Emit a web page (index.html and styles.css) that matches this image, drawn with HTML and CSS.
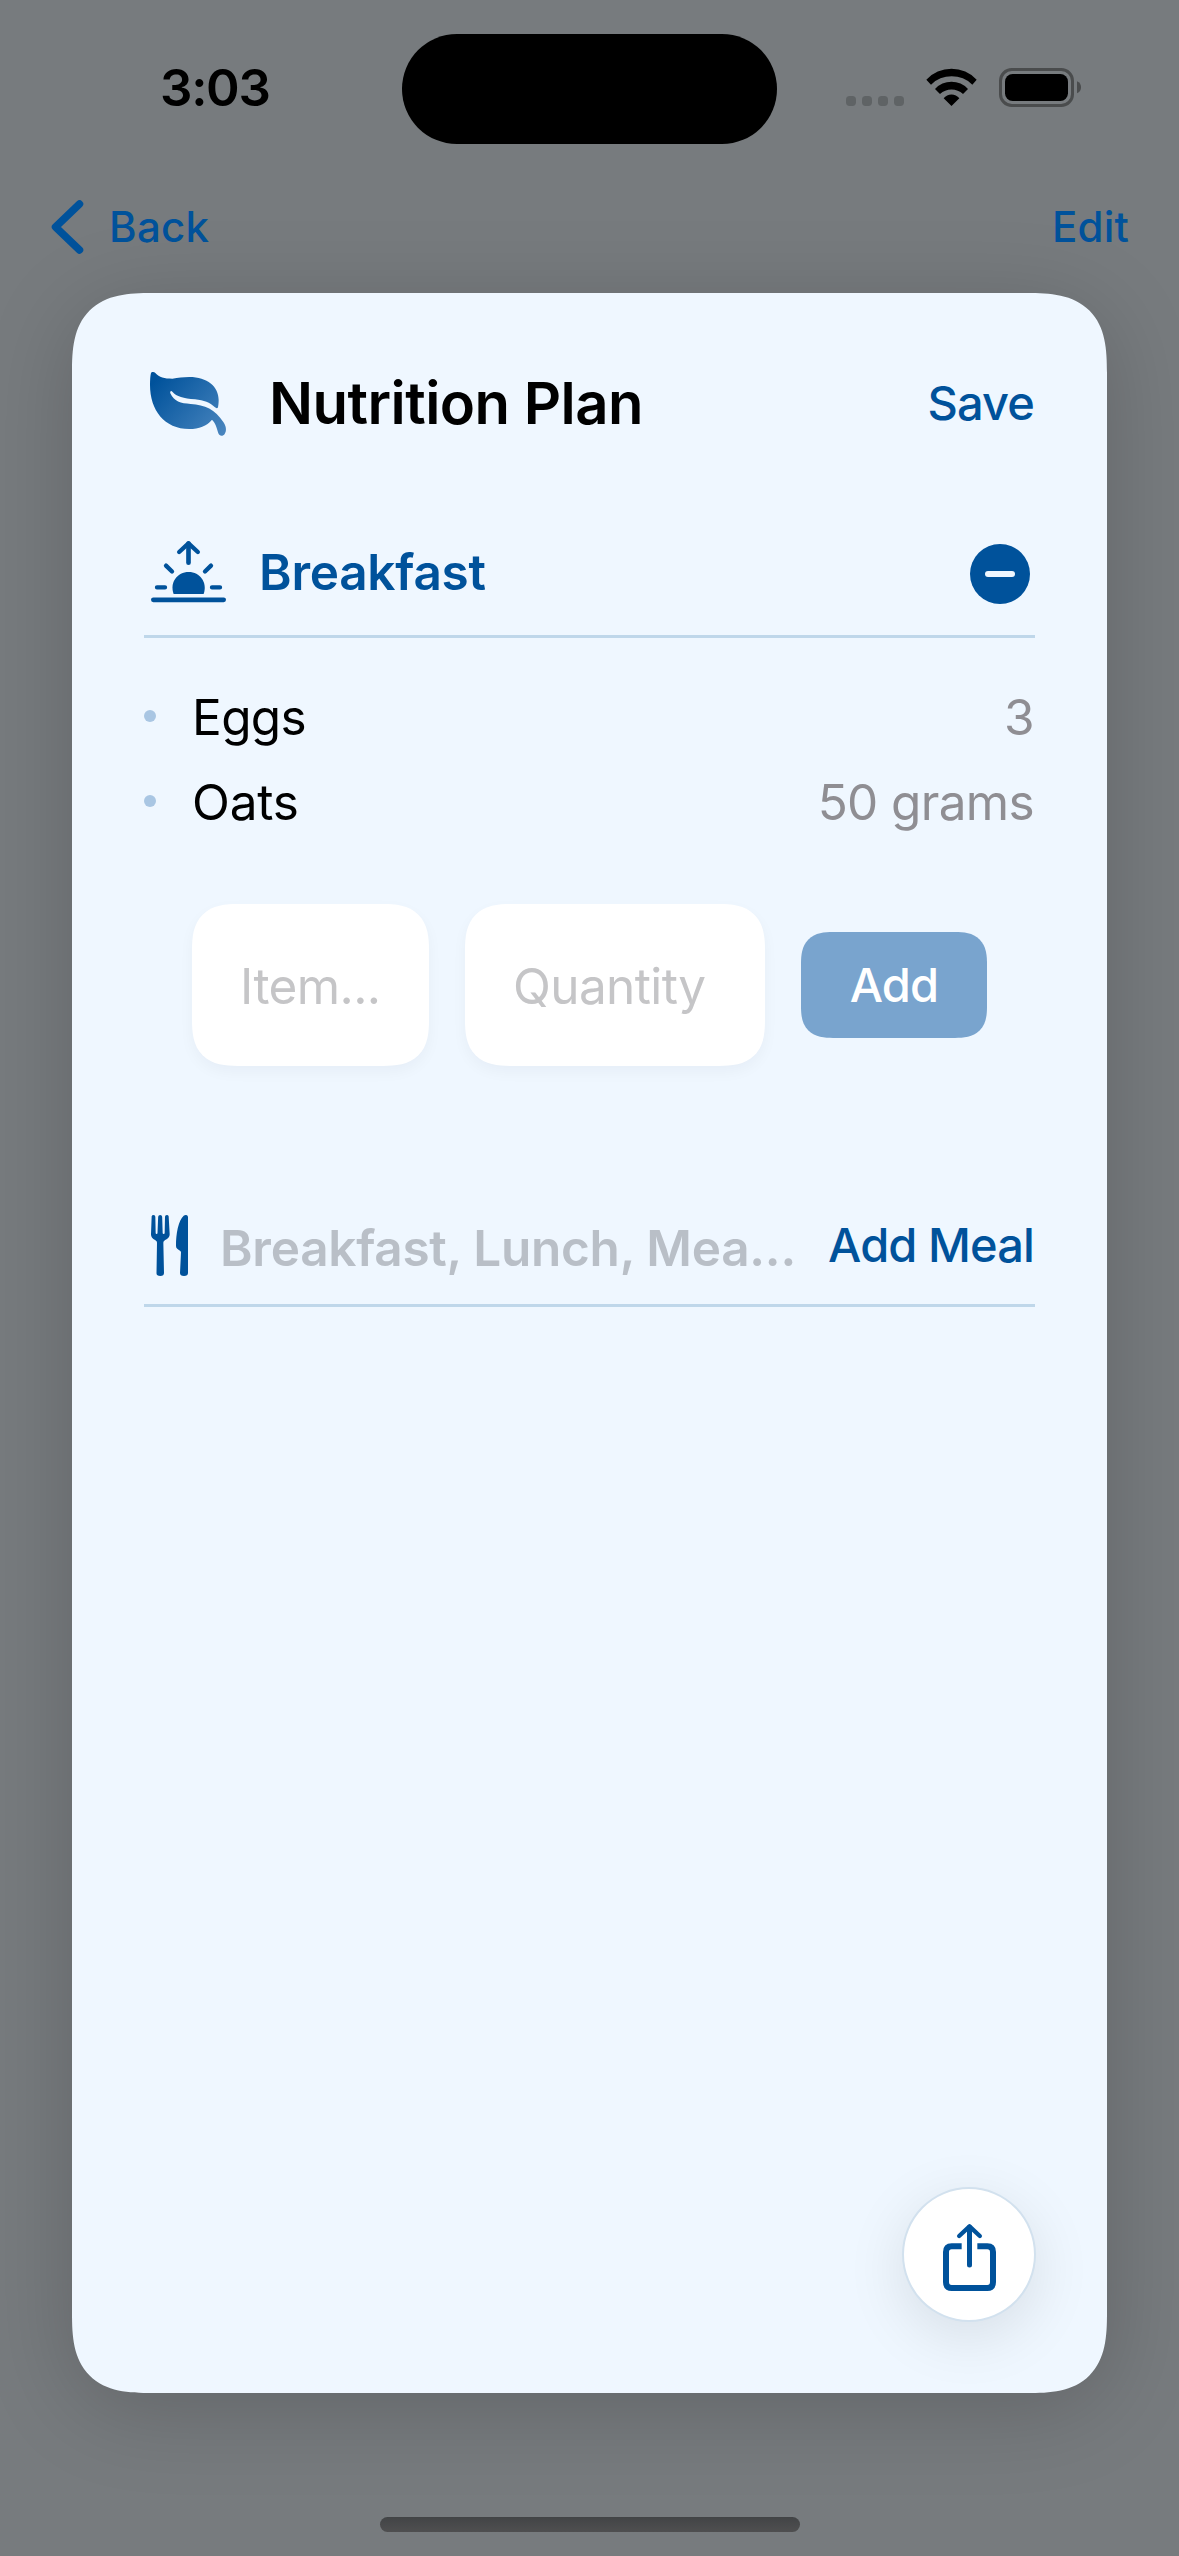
FILE: index.html
```html
<!DOCTYPE html>
<html lang="en">
<head>
<meta charset="utf-8">
<title>Nutrition Plan</title>
<link rel="stylesheet" href="styles.css">
</head>
<body>
<header class="status">
  <span class="time">3:03</span>
  <span class="island"></span>
  <svg class="indicators" viewBox="198 204 705 117" aria-hidden="true">
    <g fill="#5f6365">
      <rect x="198" y="288" width="30" height="30" rx="11"/>
      <rect x="246" y="288" width="30" height="30" rx="11"/>
      <rect x="294" y="288" width="30" height="30" rx="11"/>
      <rect x="342" y="288" width="30" height="30" rx="11"/>
    </g>
    <path d="M439 239A103 103 0 0 1 590 239L577 254A88 88 0 0 0 453 254ZM465 267A67 67 0 0 1 564 267L549 282A50 50 0 0 0 480 282ZM491 295A30 30 0 0 1 538 295L514.500 318Z"/>
    <rect x="661.500" y="208.500" width="216" height="108" rx="34" fill="none" stroke="#4a4c4d" stroke-width="9"/>
    <rect x="675" y="222" width="189" height="81" rx="23"/>
    <path d="M891 244Q903 249 903 262Q903 275 891 280Z" fill="#4a4c4d"/>
  </svg>
</header>

<nav class="nav">
  <a class="back">
    <svg class="chevron" viewBox="0 0 33 54" aria-hidden="true"><path d="M28.500 4L4.500 27L28.500 50"/></svg>
    <span>Back</span>
  </a>
  <a class="edit">Edit</a>
</nav>

<main class="card">
  <div class="title-row">
    <svg class="leaf" viewBox="60 60 231 201" aria-hidden="true">
      <defs>
        <linearGradient id="leafFill" gradientUnits="userSpaceOnUse" x1="85" y1="80" x2="285" y2="255">
          <stop offset="0" stop-color="#00529b"/>
          <stop offset="1" stop-color="#4a86bf"/>
        </linearGradient>
      </defs>
      <path fill="url(#leafFill)" d="M63 69C65 65 73 65 76 69C88 82 103 86 127 86C145 84 158 81 178 81C232 81 266 110 266 150C266 159 265 166 264 172C262 176 258 175 254 171C240 158 222 151 195 148C160 145 140 140 127 125C123 121 119 125 121 130C132 155 152 160 182 162C225 165 255 178 280 216C288 228 291 241 284 252C280 259 268 260 265 250C261 234 255 217 246 209C230 228 207 237 178 237C103 237 60 180 60 105C60 91 61 76 63 69Z"/>
    </svg>
    <h1 class="title">Nutrition Plan</h1>
    <button class="link save">Save</button>
  </div>

  <div class="meal-head">
    <div class="meal-label">
      <svg class="sunrise" viewBox="60 60 231 189" aria-hidden="true">
        <g fill="none" stroke="#00529b" stroke-width="13" stroke-linecap="round" stroke-linejoin="round">
          <path stroke-width="14" d="M175.500 71V128"/>
          <path d="M147.500 96L175.500 70L203.500 96"/>
          <path d="M108 137L126 154.500M243 137L225 154.500M81 202H105M246 202H270"/>
          <path stroke-width="14" d="M70 239.500H281"/>
        </g>
        <path fill="#00529b" d="M131 222C118 188 142 156 176 156C210 156 233 188 221 222Z"/>
      </svg>
      <h2 class="meal-name">Breakfast</h2>
    </div>
    <button class="remove" aria-label="Remove meal"><span class="minus"></span></button>
  </div>

  <ul class="foods">
    <li class="food"><span class="dot"></span><span class="name eggs">Eggs</span><span class="amount">3</span></li>
    <li class="food"><span class="dot"></span><span class="name oats">Oats</span><span class="amount">50 grams</span></li>
  </ul>

  <div class="entry">
    <div class="field item">Item...</div>
    <div class="field quantity">Quantity</div>
    <button class="add">Add</button>
  </div>

  <div class="meal-head new-meal">
    <svg class="cutlery" viewBox="60 72 117 189" aria-hidden="true">
      <path fill="#00529b" d="M65 79Q66 75 70.500 75Q76 75 76 80L77 129Q77 132 79.500 132Q82.500 132 82.500 129L84.500 80Q85 75 90.500 75Q96 75 96.500 80L98 129Q98 132 101 132Q104 132 104 129L105 80Q105 75 110.500 75Q115 75 116 79L119 133C119 144 110 148 103 152Q100 154 100 158L102 249Q102 258 91 258Q79 258 79.500 249L81 158Q81 154 78 152C71 148 63 144 63 133Z"/>
      <path fill="#00529b" d="M161 77Q165 74 169 75Q174 76 174 81V249Q174 258 162 258Q150 258 150 249L153 187Q153 184 150 182C144 178 138 176 138 168C138 130 145 92 161 77Z"/>
    </svg>
    <span class="placeholder">Breakfast, Lunch, Mea...</span>
    <button class="link add-meal">Add Meal</button>
  </div>

  <button class="share" aria-label="Share">
    <svg class="share-icon" viewBox="246 219 165 207" aria-hidden="true">
      <g fill="none" stroke="#00529b">
        <path stroke-width="18" d="M305 288.500H275Q258 288.500 258 306V396Q258 414 275 414H382Q399 414 399 396V306Q399 288.500 382 288.500H352"/>
        <path stroke-width="15" stroke-linecap="round" d="M328.500 232V345"/>
        <path stroke-width="13" stroke-linecap="round" stroke-linejoin="round" d="M297.500 258L328.500 229L359.500 258"/>
      </g>
    </svg>
  </button>
</main>

<div class="home-bar"></div>
</body>
</html>
```
FILE: styles.css
```css
* {
  box-sizing: border-box;
}

body {
  margin: 0;
  width: 1179px;
  height: 2556px;
  overflow: hidden;
  display: flex;
  flex-direction: column;
  background: #777b7e;
  font-family: Inter, "Liberation Sans", sans-serif;
  font-size: 49.5px;
  line-height: 60px;
  color: #000;
}

h1, h2, ul {
  margin: 0;
  padding: 0;
}

button {
  border: 0;
  padding: 0;
  background: none;
  font: inherit;
}

svg {
  display: block;
  flex: none;
}

/* Status bar */
.status {
  height: 178px;
  flex: none;
  display: grid;
  grid-template-columns: 1fr 375px 1fr;
  align-items: center;
}

.time {
  padding: 0 0 2px 160px;
  font-size: 51px;
  font-weight: 600;
  letter-spacing: -1.3px;
}

.island {
  height: 110px;
  border-radius: 55px;
  background: #000;
}

.indicators {
  width: 235px;
  height: 39px;
  margin: 0 0 3px 69px;
}

/* Navigation bar */
.nav {
  height: 98px;
  flex: none;
  padding: 0 50px 0 51px;
  display: flex;
  align-items: center;
  justify-content: space-between;
  color: #00529b;
  font-size: 42px;
  font-weight: 500;
}

.back {
  display: flex;
  align-items: center;
  gap: 25px;
  letter-spacing: 0.3px;
}

.edit {
  letter-spacing: 0.2px;
}

.chevron {
  width: 33px;
  height: 54px;
  fill: none;
  stroke: #00529b;
  stroke-width: 7.5;
  stroke-linecap: round;
  stroke-linejoin: round;
}

/* Card */
.card {
  height: 2100px;
  flex: none;
  margin: 17px 72px 0;
  padding: 0 72px 71px;
  display: flex;
  flex-direction: column;
  border-radius: 80px;
  corner-shape: superellipse(1.48);
  background: #eff7ff;
  box-shadow: 0 15px 90px rgba(0, 0, 0, 0.18);
}

.title-row {
  height: 220px;
  padding-left: 6px;
  display: flex;
  align-items: center;
}

.leaf {
  width: 77px;
  height: 67px;
}

.title {
  margin-left: 42px;
  flex: 1;
  font-size: 58px;
  font-weight: 600;
  letter-spacing: -0.52px;
}

.link {
  color: #00529b;
  font-size: 47px;
  font-weight: 500;
  letter-spacing: -0.9px;
}

.save {
  margin-right: 1px;
}

.meal-head {
  height: 125px;
  padding-left: 6px;
  display: flex;
  align-items: center;
  justify-content: space-between;
  border-bottom: 3px solid #bfd7ea;
}

.meal-label {
  display: flex;
  align-items: center;
  gap: 32px;
  padding-bottom: 5px;
}

.sunrise {
  width: 77px;
  height: 63px;
}

.meal-name {
  color: #00529b;
  font-size: 49.5px;
  font-weight: 600;
  letter-spacing: -0.25px;
}

.remove {
  width: 60px;
  height: 60px;
  margin-right: 5px;
  border-radius: 50%;
  background: #00529b;
  display: flex;
  align-items: center;
  justify-content: center;
}

.minus {
  width: 30px;
  height: 6px;
  border-radius: 3px;
  background: #eff7ff;
}

/* Food list */
.foods {
  margin-top: 36px;
  list-style: none;
}

.food {
  height: 85px;
  display: flex;
  align-items: center;
}

.dot {
  width: 12px;
  height: 12px;
  margin-bottom: 2px;
  border-radius: 50%;
  background: #a9c6e3;
}

.name {
  flex: 1;
  margin-left: 36px;
}

.eggs {
  letter-spacing: -0.62px;
}

.oats {
  letter-spacing: -0.2px;
}

.amount {
  margin-right: 1px;
  color: #8f8e93;
  letter-spacing: -0.65px;
}

/* Entry row */
.entry {
  margin-top: 60px;
  padding-left: 48px;
  display: flex;
  align-items: center;
  gap: 36px;
}

.field {
  height: 162px;
  display: flex;
  align-items: center;
  border-radius: 46px;
  corner-shape: superellipse(1.4);
  background: #fff;
  box-shadow: 0 6px 15px rgba(0, 30, 60, 0.04);
  color: #c5c5c7;
  letter-spacing: -0.6px;
  padding-top: 2px;
}

.item {
  width: 237px;
  padding-left: 48px;
}

.quantity {
  width: 300px;
  padding-left: 48px;
}

.add {
  width: 186px;
  height: 106px;
  border-radius: 32px;
  corner-shape: superellipse(1.4);
  background: #79a4ce;
  color: #fff;
  font-size: 47px;
  font-weight: 500;
  letter-spacing: -0.85px;
}

/* New meal row */
.new-meal {
  height: 121px;
  margin-top: 120px;
}

.cutlery {
  width: 39px;
  height: 63px;
}

.placeholder {
  flex: 1;
  margin-left: 31px;
  padding-top: 6px;
  color: #b9bfc7;
  font-weight: 600;
  letter-spacing: -0.27px;
  white-space: nowrap;
}

.add-meal {
  margin-right: 1px;
}

/* Share button */
.share {
  width: 134px;
  height: 135px;
  margin: auto -1px 0 0;
  align-self: flex-end;
  display: flex;
  align-items: center;
  justify-content: center;
  padding-top: 6px;
  border: 2px solid #d2e1ee;
  border-radius: 50%;
  background: #fff;
  box-shadow: 0 15px 60px rgba(0, 0, 0, 0.1);
}

.share-icon {
  width: 55px;
  height: 69px;
}

.home-bar {
  width: 420px;
  height: 15px;
  flex: none;
  margin: 124px auto 0;
  border-radius: 8px;
  background: linear-gradient(#424446, #4f4f50);
}
```
